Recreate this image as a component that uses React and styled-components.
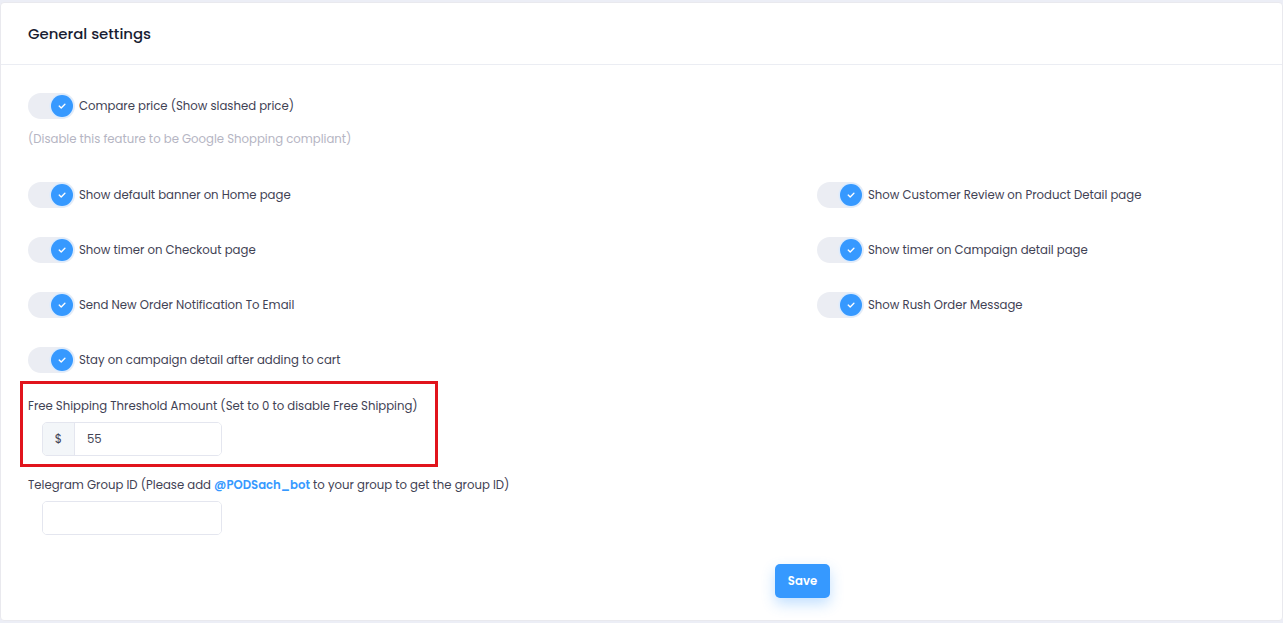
import React from 'react';
import styled, { createGlobalStyle } from 'styled-components';

const GlobalStyle = createGlobalStyle`
  html, body {
    margin: 0;
    padding: 0;
    background: #eceef6;
  }
  body {
    font-family: 'Poppins', 'Open Sans', 'Liberation Sans', sans-serif;
    color: #3f4254;
  }
`;

const Page = styled.div`
  padding-top: 2px;
  height: 621px;
  box-sizing: border-box;
`;

const Card = styled.div`
  background: #fff;
  border: 1px solid #e9e9ee;
  border-radius: 4px;
  height: 619px;
  box-sizing: border-box;
  display: flex;
  flex-direction: column;
`;

const CardHeader = styled.div`
  height: 61px;
  border-bottom: 1px solid #ebedf3;
  display: flex;
  align-items: center;
  padding: 0 27px;
`;

const Title = styled.h3`
  margin: 0;
  font-size: 14.9px;
  font-weight: 500;
  color: #181c32;
`;

const CardBody = styled.div`
  padding: 28px 27px 0;
  display: flex;
  flex-direction: column;
`;

const Hint = styled.div`
  font-size: 11.7px;
  line-height: 17px;
  color: #b5b5c3;
  margin: 12px 0 34px;
`;

const Grid = styled.div`
  display: grid;
  grid-template-columns: 789px 1fr;
  row-gap: 29px;
`;

const SwitchRow = styled.label`
  display: flex;
  align-items: center;
  gap: 4px;
  font-size: 11.7px;
  color: #3f4254;
  height: 26px;
`;

const Track = styled.span`
  position: relative;
  width: 47px;
  height: 26px;
  border-radius: 13px;
  background: #ebedf3;
  flex-shrink: 0;
`;

const Knob = styled.span`
  position: absolute;
  right: 2px;
  top: 2px;
  width: 22px;
  height: 22px;
  border-radius: 50%;
  background: #3699ff;
  box-shadow: 0 0 0 1.5px #dcebfd;
  display: flex;
  align-items: center;
  justify-content: center;
`;

const Toggle = ({ children }) => (
  <SwitchRow>
    <Track>
      <Knob>
        <svg width="10" height="8" viewBox="0 0 10 8" fill="none">
          <path d="M2.2 4.1l2 1.8 3.7-3.6" stroke="#fff" strokeWidth="1.4" strokeLinecap="round" strokeLinejoin="round" />
        </svg>
      </Knob>
    </Track>
    {children}
  </SwitchRow>
);

const FieldBox = styled.div`
  margin-top: ${(p) => p.top || 0}px;
  margin-left: ${(p) => (p.highlight ? -8 : 0)}px;
  width: ${(p) => (p.highlight ? '418px' : 'auto')};
  border: ${(p) => (p.highlight ? '3px solid #e1141c' : 'none')};
  padding: ${(p) => (p.highlight ? '14px 5px 8px 5px' : '0')};
  box-sizing: border-box;
`;

const FieldLabel = styled.div`
  font-size: 11.7px;
  line-height: 17px;
  color: #3f4254;
  margin-bottom: 7px;
`;

const Mention = styled.span`
  color: #3699ff;
  font-weight: 600;
`;

const InputGroup = styled.div`
  display: flex;
  width: 180px;
  height: 34px;
  margin-left: 14px;
  border: 1px solid #e4e6ef;
  border-radius: 5px;
  overflow: hidden;
  box-sizing: border-box;
`;

const Addon = styled.span`
  width: 31px;
  background: #f3f6f9;
  border-right: 1px solid #e4e6ef;
  display: flex;
  align-items: center;
  justify-content: center;
  font-size: 11.7px;
  color: #3f4254;
`;

const Input = styled.input`
  flex: 1;
  border: none;
  outline: none;
  padding: 0 12px;
  font: inherit;
  font-size: 11.7px;
  color: #3f4254;
  min-width: 0;
`;

const Footer = styled.div`
  padding: 29px 0 0 747px;
`;

const SaveButton = styled.button`
  width: 55px;
  height: 34px;
  border: none;
  border-radius: 5px;
  background: #3699ff;
  color: #fff;
  font: inherit;
  font-size: 11.7px;
  font-weight: 600;
  box-shadow: 0 6px 14px rgba(54, 153, 255, 0.3);
`;

export default function App() {
  return (
    <Page>
      <GlobalStyle />
      <Card>
        <CardHeader>
          <Title>General settings</Title>
        </CardHeader>
        <CardBody>
          <Toggle>Compare price (Show slashed price)</Toggle>
          <Hint>(Disable this feature to be Google Shopping compliant)</Hint>
          <Grid>
            <Toggle>Show default banner on Home page</Toggle>
            <Toggle>Show Customer Review on Product Detail page</Toggle>
            <Toggle>Show timer on Checkout page</Toggle>
            <Toggle>Show timer on Campaign detail page</Toggle>
            <Toggle>Send New Order Notification To Email</Toggle>
            <Toggle>Show Rush Order Message</Toggle>
            <Toggle>Stay on campaign detail after adding to cart</Toggle>
          </Grid>
          <FieldBox highlight top={8}>
            <FieldLabel>Free Shipping Threshold Amount (Set to 0 to disable Free Shipping)</FieldLabel>
            <InputGroup>
              <Addon>$</Addon>
              <Input defaultValue="55" />
            </InputGroup>
          </FieldBox>
          <FieldBox top={10}>
            <FieldLabel>
              Telegram Group ID (Please add <Mention>@PODSach_bot</Mention> to your group to get the group ID)
            </FieldLabel>
            <InputGroup>
              <Input />
            </InputGroup>
          </FieldBox>
          <Footer>
            <SaveButton>Save</SaveButton>
          </Footer>
        </CardBody>
      </Card>
    </Page>
  );
}
